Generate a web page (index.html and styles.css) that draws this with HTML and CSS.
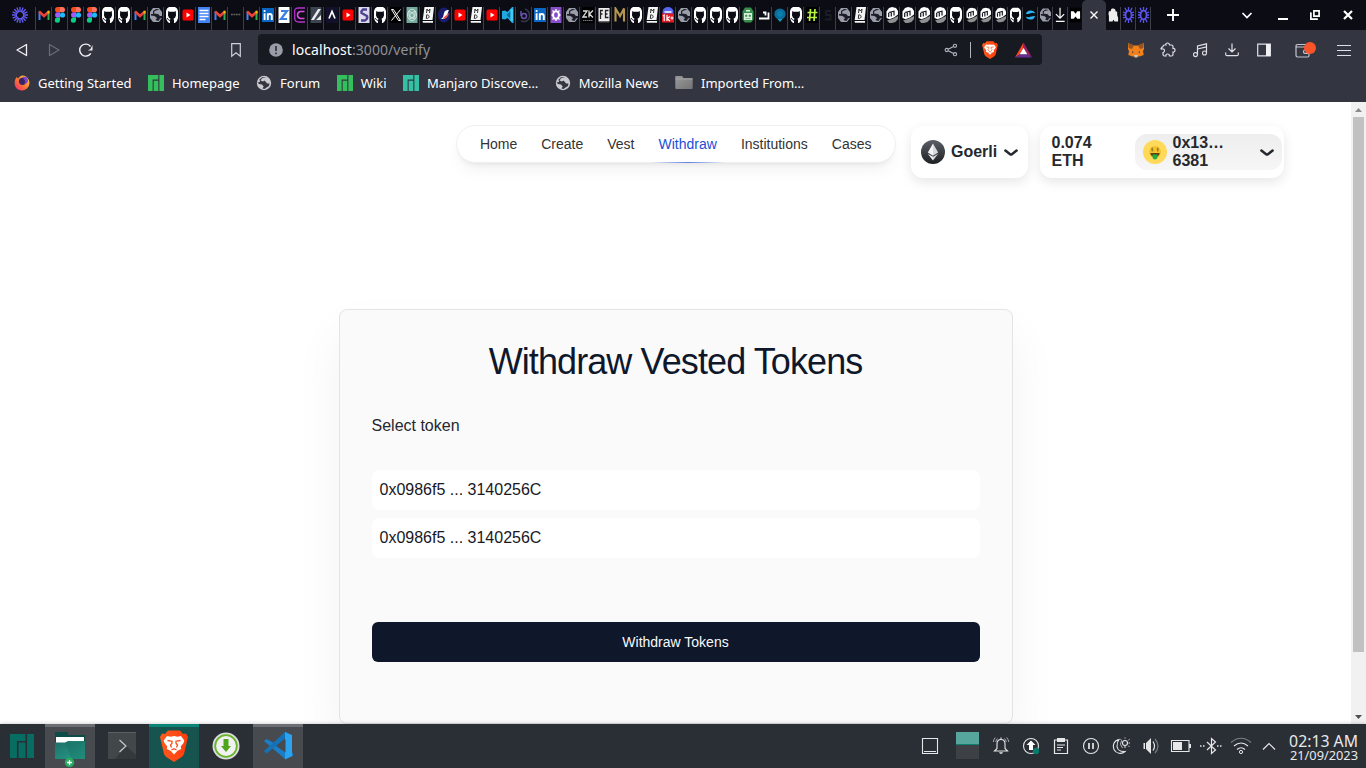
FILE: index.html
```html
<!DOCTYPE html>
<html lang="en">
<head>
<meta charset="utf-8">
<title>Withdraw Vested Tokens</title>
<link rel="stylesheet" href="styles.css">
</head>
<body>
<svg class="defs" width="0" height="0">
  <defs>
    <linearGradient id="eth-g" x1="0" y1="0" x2="0" y2="1"><stop offset="0" stop-color="#5b5f66"/><stop offset="1" stop-color="#1e2024"/></linearGradient>
    <linearGradient id="folder-g" x1="0" y1="0" x2="1" y2="1"><stop offset="0" stop-color="#9a9a9a"/><stop offset="1" stop-color="#747474"/></linearGradient>
    <linearGradient id="fx-g" x1="1" y1="0" x2="0" y2="1"><stop offset="0" stop-color="#ffe14d"/><stop offset=".5" stop-color="#ff7a30"/><stop offset="1" stop-color="#f0247a"/></linearGradient>
    <linearGradient id="teal-g" x1="0" y1="0" x2="1" y2="1"><stop offset="0" stop-color="#1d6f66"/><stop offset="1" stop-color="#26a08c"/></linearGradient>
    <linearGradient id="brave-g" x1="0" y1="0" x2="1" y2="0"><stop offset="0" stop-color="#ff5a1f"/><stop offset="1" stop-color="#ff3d0c"/></linearGradient>
  </defs>
  <symbol id="gmail" viewBox="0 0 12 16"><path d="M.5 13V4.500h2V13z" fill="#4285f4"/><path d="M11.500 13V4.500h-2V13z" fill="#34a853"/><path d="M1 4.500 6 9l5-4.500" fill="none" stroke="#ea4335" stroke-width="2.600"/><path d="M9.500 6.500V4l2-.5v3z" fill="#fbbc04"/></symbol>
  <symbol id="figma" viewBox="0 0 12 16"><path d="M6 0H3.700a2.600 2.600 0 0 0 0 5.300H6z" fill="#f24e1e"/><path d="M6 0h2.300a2.600 2.600 0 0 1 0 5.300H6z" fill="#ff7262"/><path d="M6 5.300H3.700a2.600 2.600 0 0 0 0 5.300H6z" fill="#a259ff"/><circle cx="8.500" cy="8" r="2.600" fill="#1abcfe"/><path d="M6 10.600H3.700A2.600 2.600 0 1 0 6 13.400z" fill="#0acf83"/></symbol>
  <symbol id="gh" viewBox="0 0 12 16"><path d="M3 0h6q2.500 1 3 4v7q-.5 3-3 5H8v-3l-.5-1.500Q9.500 11 10 8.500L9.800 4l-1.300.8h-5L2.200 4 2 8.500q.5 2.500 2.500 3L4 13v3H3Q.5 14 0 11V4q.5-3 3-4z" fill="#fff"/><path d="M1 11q1.500 2.500 3 2.500" fill="none" stroke="#0c0c14" stroke-width=".9"/></symbol>
  <symbol id="globe" viewBox="0 0 12 16"><path d="M3 1h6l3 4v6l-3 4H3l-3-4V5z" fill="#9a9ea9"/><path d="M9.500 2.500 4.500 4l-.5 2.500 4 .5 2 2h2v2l-2 .5-1.500 2.500-3-1 1.500-2-2.500-2L1 8.500V7h2V4L6 2zM10 5l1.500 1z" fill="#1c1d29"/><path d="M5.500 4.500h4v2h-3z" fill="#9a9ea9"/></symbol>
  <symbol id="globe16" viewBox="0 0 16 16"><circle cx="8" cy="8" r="7.200" fill="#c8cad0"/><path d="M10.500 2 6 3.200 4.500 5.500 7 6.500l1.500-1L10 7l1 1.500h2.500L13 11l-2.500 1.500L8.500 14l-2-.5 1.200-2L6 9.500 3 9 1.500 7.500 4 7 3.500 4.500 6 2.200z" fill="#333541"/><path d="m7 4.500 3-.8L11 5l-1 1.500L8.500 5z" fill="#c8cad0"/></symbol>
  <symbol id="yt" viewBox="0 0 12 16"><rect x=".5" y="2.500" width="11" height="11" rx="1.500" fill="#f00"/><path d="m4.500 5.500 4 2.500-4 2.500z" fill="#fff"/></symbol>
  <symbol id="docs" viewBox="0 0 12 16"><path d="M0 0h12v16H0z" fill="#4384f4"/><path d="M1.500 3.500h9M1.500 6.500h9M1.500 9.500h9M1.500 12.500h6" stroke="#fff" stroke-width="1.500"/></symbol>
  <symbol id="li" viewBox="0 0 12 16"><path d="M0 1h12v14H0z" fill="#0a66c2"/><path d="M2.600 6.200V13M5.800 13V6.200m0 3c0-3 4-3 4 0V13" fill="none" stroke="#fff" stroke-width="1.900"/><circle cx="2.600" cy="4" r="1.100" fill="#fff"/></symbol>
  <symbol id="zed" viewBox="0 0 12 16"><path d="M.5 0h11v16H.5z" fill="#fff"/><path d="M3 4h6L3 12h6" fill="none" stroke="#3a82e0" stroke-width="2.200"/></symbol>
  <symbol id="rings" viewBox="0 0 12 16"><g fill="none" stroke="#b431d0"><path d="M11 1H4Q0 1 .7 6v5q0 4 4 4H11" stroke-width="1.300"/><path d="M10.500 4.500H6.500Q3.500 5 3.500 8t3 3.500h4" stroke="#d94be0" stroke-width="1.500"/></g></symbol>
  <symbol id="slash" viewBox="0 0 12 16"><path d="M.5 0h11v16H.5z" fill="#3c4450"/><path d="M1 13 8 2h3L4 13zM6 13l5-5v5z" fill="#e7e9eb"/></symbol>
  <symbol id="aye" viewBox="0 0 12 16"><path d="M0 0h12v16H0z" fill="#12102a"/><path d="m3 11.500 3-7 3 7" fill="none" stroke="#fff" stroke-width="1.700"/></symbol>
  <symbol id="ess" viewBox="0 0 12 16"><path d="M.5 0h11v16H.5z" fill="#ded9ee"/><path d="M9 2.500H5Q3 4 3.500 6L9 9q1 3-2 4.500H3" fill="none" stroke="#4b4390" stroke-width="2.400"/></symbol>
  <symbol id="ex" viewBox="0 0 12 16"><path d="M0 0h12v16H0z" fill="#000"/><path d="M1.500 2.500h2l7 11h-2zM10.500 2.500l-9 11" fill="none" stroke="#fff"/></symbol>
  <symbol id="ai" viewBox="0 0 12 16"><path d="M.5 0h11v16H.5z" fill="#74aa9c"/><g fill="none" stroke="#e2efec" stroke-width=".8"><ellipse cx="6" cy="8" rx="4.500" ry="5.700"/><path d="m3 4 5 3v5L3 9zM9 4 4 7v5l5-3z"/></g></symbol>
  <symbol id="md" viewBox="0 0 12 16"><path d="M2.500 0H12l-1.500 13H.7zM.5 14h10.500v1.800H1z" fill="#f5f5f5"/><path d="m4.500 6 .5-4 1.200 2 1.800-2-.5 4M4.300 11.500l.4-3.700c3.300 0 3.300 3.700-.4 3.700" fill="none" stroke="#222" stroke-width=".9"/></symbol>
  <symbol id="swoosh" viewBox="0 0 12 16"><ellipse cx="6" cy="8" rx="6" ry="7.500" fill="#1a1d6e"/><path d="M1 12c4 0 4-2 5-6 1-3 3-3 5-3-2 3-1 8-6 9z" fill="#fff"/><path d="M6 10c2-1 3-3 5-4-1 4-3 6-6 6z" fill="#f05a4a"/></symbol>
  <symbol id="code" viewBox="0 0 12 16"><path d="m0 4 3-.5L5.500 5 10 0h1.500v16H10l-4.500-5L3 12.500 0 12z" fill="#1fa9e0"/><path d="M4.500 8 8.500 4v8z" fill="#0b6c9c"/><path d="M8.500 2h2.500v12H8.500z" fill="#45c8f5"/></symbol>
  <symbol id="orb" viewBox="0 0 12 16"><g fill="none"><path d="M3 14q7 2 8.500-4Q12 4 7 2" stroke="#34344c" stroke-width="1.500"/><circle cx="6" cy="9" r="2.500" stroke="#6753a8" stroke-width="1.500"/><path d="M3 4v5" stroke="#6753a8" stroke-width="1.500"/></g></symbol>
  <symbol id="gear" viewBox="0 0 12 16"><path d="M.5 0h11v16H.5z" fill="#8750c8"/><ellipse cx="6" cy="8" rx="2.900" ry="3.800" fill="none" stroke="#fff" stroke-width="2"/><path d="M6 2v2M6 12v2M1.500 8H3M9 8h1.500M2.500 3.500 4 5M9.500 3.500 8 5M2.500 12.500 4 11M9.500 12.500 8 11" stroke="#fff" stroke-width="1.300"/></symbol>
  <symbol id="zk" viewBox="0 0 12 16"><path d="M0 0h12v16H0z" fill="#000"/><path d="M1 4h4l-4 6h4M7 3.500V10.500M11 3.500 7.500 7l3.500 3.500" fill="none" stroke="#ddd" stroke-width="1.300"/><path d="M1 13.500h10" stroke="#777" stroke-dasharray="1.500 .5"/></symbol>
  <symbol id="fe" viewBox="0 0 12 16"><path d="M.5 1h11v13.500H.5z" fill="#eee"/><path d="M2.500 12V3.500h2.500M2.500 7h2M10.500 3.500H7.500v7h3M7.500 7h2" fill="none" stroke="#222" stroke-width="1.300"/><path d="M1 15h10" stroke="#555"/></symbol>
  <symbol id="em" viewBox="0 0 12 16"><path d="M1.500 14.500V1.500L6 9l4-7.500v13" fill="none" stroke="#b5964e" stroke-width="2.100"/></symbol>
  <symbol id="onek" viewBox="0 0 12 16"><ellipse cx="6" cy="5" rx="5.500" ry="5" fill="#5865f2"/><path d="M2.500 5h7" stroke="#fff" stroke-width="1.500"/><path d="M0 6.500h12v9H0z" fill="#e01b24"/><path d="m1 9 1.200-.8V14M5 8v6M8 9.500 5 11.500 8 14M8.500 11h3M10 9.500v3" fill="none" stroke="#fff" stroke-width="1.200"/></symbol>
  <symbol id="robot" viewBox="0 0 12 16"><path d="M3 .5h6l2.500 4v8L9 15.500H3L.5 12.500v-8z" fill="#388e4b"/><path d="M2 6h8v7H2zM4 3h4v1.500H4z" fill="#d9eddc"/><path d="M3.500 8h1.500v1.500H3.500zM7 8h1.500v1.500H7zM3.500 11.500h5" fill="#388e4b" stroke="#388e4b" stroke-width=".5"/></symbol>
  <symbol id="shin" viewBox="0 0 12 16"><path d="M1 11.500h9.500V5.500M5 5.500h2.500v3" fill="none" stroke="#fff" stroke-width="1.800"/></symbol>
  <symbol id="pin" viewBox="0 0 12 16"><ellipse cx="6" cy="7" rx="5.700" ry="5.500" fill="#0c6b9b"/><path d="m3.500 12 2.500 3 2.500-3z" fill="#10a0bb"/><ellipse cx="6" cy="7" rx="3" ry="3" fill="#087fae"/></symbol>
  <symbol id="hash" viewBox="0 0 12 16"><path d="M0 0h12v16H0z" fill="#000"/><path d="M4.500 2 3.500 14M9 2 8 14M1.500 5.500h10M1 10.500h10" stroke="#b7f43b" stroke-width="1.700"/></symbol>
  <symbol id="darks" viewBox="0 0 12 16"><path d="M9 4H4v4h4.500v4.500H3" fill="none" stroke="#1b1c24" stroke-width="1.800"/></symbol>
  <symbol id="mm" viewBox="0 0 12 16"><path d="M.5 11V4.500L3 1 6 0l4 1 2 3v3.500l-4 3-4.500 1.700z" fill="#fff"/><path d="M2.700 10V6M5.300 9.500V5.500M8 8.500V4.500M2.700 5.500l6-1.500" fill="none" stroke="#15161f" stroke-width="1.200"/><path d="m1 13.500 5-1.500 6-3v3l-2.500 3L6 16H3.500z" fill="#8e908f"/></symbol>
  <symbol id="swirl" viewBox="0 0 12 16"><path d="M1 7q1-4 5-4t5 3Q8 5 6 6T1 7zm10 2q-1 4-5 4T1 10q3 1 5 0t5-1z" fill="#29b6f6"/></symbol>
  <symbol id="dl" viewBox="0 0 12 16"><path d="M5.500 0v11M1 7l4.500 4.500L10 7M1 15h9.500" fill="none" stroke="#fff" stroke-width="1.300"/></symbol>
  <symbol id="bow" viewBox="0 0 12 16"><path d="M0 0h12v16H0z" fill="#000"/><path d="M1 4h3l2 2.500L8 4h3v8H8L6 9.500 4 12H1z" fill="#fff"/></symbol>
  <symbol id="piece" viewBox="0 0 12 16"><path d="M1 4h2q0-4 3-3t2 3l2 .5v3.500l1 3v4H7q-1-3-2 0H1V9l-.5-2z" fill="#eee"/></symbol>
  <symbol id="burst" viewBox="0 0 16 16"><path d="M8 0v5M8 11v5M0 8h5M11 8h5M2.300 2.300 6 6M10 10l3.700 3.700M2.300 13.700 6 10M10 6l3.700-3.700M4.900.6 6.800 5.200M9.200 10.800l1.900 4.600M.6 4.900l4.600 1.900M10.800 9.200l4.600 1.900M.6 11.100l4.600-1.900M10.800 6.800l4.600-1.900M4.900 15.400l1.900-4.600M9.200 5.200 11.100.6" stroke="#635df5" stroke-width="1.350"/></symbol>
  <symbol id="gearburst" viewBox="0 0 11 16"><ellipse cx="5.500" cy="8" rx="3" ry="4.300" fill="none" stroke="#5b55f0" stroke-width="1.700"/><path d="M5.500 0v3M5.500 13v3M2 .7l1.500 3.500M9 .7 7.500 4.200M2 15.300l1.500-3.500M9 15.300l-1.500-3.500M0 5l3 1M0 8h2.500M0 11l3-1M11 5 8 6M11 8H8.500M11 11l-3-1" stroke="#5b55f0" stroke-width="1.300"/></symbol>
  <symbol id="manjaro" viewBox="0 0 16 16"><path d="M0 0h10.300v4.600H4.600V16H0zM5.700 5.700h4.600V16H5.700zM11.400 0H16v16h-4.600z" fill="currentColor"/></symbol>
  <symbol id="brave" viewBox="0 0 28 32"><path d="m5 4 3-3.500h12L23 4l3-.5L28 7l-1 4-3 13q-1 2-3 3.500L14 32l-7-4.500Q5 26 4 24L1 11 0 7l2-3.500z" fill="url(#brave-g)"/><path d="m7 6 3.500.8L14 6l3.500.8L21 6l3.300 4.500-.8 2.500-2.800 3.500.5 2.500-3.700 1.700L14 24.500l-3.500-3.800L6.800 19l.5-2.500L4.500 13l-.8-2.500z" fill="#fff"/><path d="m7.500 10.500 4.500.7v2L10.500 15l1 2.500M20.500 10.500l-4.500.7v2l1.500 1.800-1 2.500M11.500 20l2.500-1.300 2.500 1.300" fill="none" stroke="#ff4d16" stroke-width="1.300"/></symbol>
</svg>

<header class="browser">
  <div class="tabs">
    <span class="tab pinned"><svg><use href="#burst"/></svg></span>
    <span class="tab"><svg><use href="#gmail"/></svg></span>
    <span class="tab"><svg><use href="#figma"/></svg></span>
    <span class="tab"><svg><use href="#figma"/></svg></span>
    <span class="tab"><svg><use href="#figma"/></svg></span>
    <span class="tab"><svg><use href="#gh"/></svg></span>
    <span class="tab"><svg><use href="#gh"/></svg></span>
    <span class="tab"><svg><use href="#gmail"/></svg></span>
    <span class="tab"><svg><use href="#globe"/></svg></span>
    <span class="tab"><svg><use href="#gh"/></svg></span>
    <span class="tab"><svg><use href="#yt"/></svg></span>
    <span class="tab"><svg><use href="#docs"/></svg></span>
    <span class="tab"><svg><use href="#gmail"/></svg></span>
    <span class="tab"><svg viewBox="0 0 12 16"><path d="M1 7.500h10" stroke="#666" stroke-width="1.600" stroke-dasharray="1.800 .7"/></svg></span>
    <span class="tab"><svg><use href="#gmail"/></svg></span>
    <span class="tab"><svg><use href="#li"/></svg></span>
    <span class="tab"><svg><use href="#zed"/></svg></span>
    <span class="tab"><svg><use href="#rings"/></svg></span>
    <span class="tab"><svg><use href="#slash"/></svg></span>
    <span class="tab"><svg><use href="#aye"/></svg></span>
    <span class="tab"><svg><use href="#yt"/></svg></span>
    <span class="tab"><svg><use href="#ess"/></svg></span>
    <span class="tab"><svg><use href="#gh"/></svg></span>
    <span class="tab"><svg><use href="#ex"/></svg></span>
    <span class="tab"><svg><use href="#ai"/></svg></span>
    <span class="tab"><svg><use href="#md"/></svg></span>
    <span class="tab"><svg><use href="#swoosh"/></svg></span>
    <span class="tab"><svg><use href="#yt"/></svg></span>
    <span class="tab"><svg><use href="#md"/></svg></span>
    <span class="tab"><svg><use href="#yt"/></svg></span>
    <span class="tab"><svg><use href="#code"/></svg></span>
    <span class="tab"><svg><use href="#orb"/></svg></span>
    <span class="tab"><svg><use href="#li"/></svg></span>
    <span class="tab"><svg><use href="#gear"/></svg></span>
    <span class="tab"><svg><use href="#globe"/></svg></span>
    <span class="tab"><svg><use href="#zk"/></svg></span>
    <span class="tab"><svg><use href="#fe"/></svg></span>
    <span class="tab"><svg><use href="#em"/></svg></span>
    <span class="tab"><svg><use href="#gh"/></svg></span>
    <span class="tab"><svg><use href="#md"/></svg></span>
    <span class="tab"><svg><use href="#onek"/></svg></span>
    <span class="tab"><svg><use href="#globe"/></svg></span>
    <span class="tab"><svg><use href="#gh"/></svg></span>
    <span class="tab"><svg><use href="#gh"/></svg></span>
    <span class="tab"><svg><use href="#gh"/></svg></span>
    <span class="tab"><svg><use href="#robot"/></svg></span>
    <span class="tab"><svg><use href="#shin"/></svg></span>
    <span class="tab"><svg><use href="#pin"/></svg></span>
    <span class="tab"><svg><use href="#gh"/></svg></span>
    <span class="tab"><svg><use href="#hash"/></svg></span>
    <span class="tab"><svg><use href="#darks"/></svg></span>
    <span class="tab"><svg><use href="#globe"/></svg></span>
    <span class="tab"><svg><use href="#md"/></svg></span>
    <span class="tab"><svg><use href="#globe"/></svg></span>
    <span class="tab"><svg><use href="#mm"/></svg></span>
    <span class="tab"><svg><use href="#mm"/></svg></span>
    <span class="tab"><svg><use href="#mm"/></svg></span>
    <span class="tab"><svg><use href="#mm"/></svg></span>
    <span class="tab"><svg><use href="#gh"/></svg></span>
    <span class="tab slim first"><svg><use href="#mm"/></svg></span>
    <span class="tab slim"><svg><use href="#mm"/></svg></span>
    <span class="tab slim"><svg><use href="#mm"/></svg></span>
    <span class="tab slim"><svg><use href="#gh"/></svg></span>
    <span class="tab slim"><svg><use href="#swirl"/></svg></span>
    <span class="tab slim"><svg><use href="#globe"/></svg></span>
    <span class="tab slim"><svg><use href="#dl"/></svg></span>
    <span class="tab slim last"><svg><use href="#bow"/></svg></span>
    <span class="tab current"><svg viewBox="0 0 10 10"><path d="m1.500 1.500 7 7m0-7-7 7" stroke="#fff" stroke-width="1.400"/></svg></span>
    <span class="tab slim"><svg><use href="#piece"/></svg></span>
    <span class="tab slim"><svg><use href="#gearburst"/></svg></span>
    <span class="tab slim"><svg><use href="#gearburst"/></svg></span>
    <svg class="new-tab" viewBox="0 0 14 14"><path d="M7 1v12M1 7h12" stroke="#fff" stroke-width="1.900"/></svg>
    <div class="window-buttons">
      <svg viewBox="0 0 16 16"><path d="m3.500 6 4.500 4.500L12.500 6" fill="none" stroke="#fff" stroke-width="1.700"/></svg>
      <svg viewBox="0 0 16 16"><path d="M3 12h10" stroke="#fff" stroke-width="2"/></svg>
      <svg viewBox="0 0 16 16"><path d="M6.900 3.900h5.200v5.200H6.900zM4.500 6H3.900v6.100H10v-.8" fill="none" stroke="#fff" stroke-width="1.700"/></svg>
      <svg viewBox="0 0 16 16"><path d="m4 4 8 8m0-8-8 8" stroke="#fff" stroke-width="2.200"/></svg>
    </div>
  </div>

  <div class="toolbar">
    <div class="nav-buttons">
      <svg viewBox="0 0 16 16"><path d="M12.500 2.500v11L3 8z" fill="none" stroke="#f1f1f4" stroke-width="1.300" stroke-linejoin="round"/></svg>
      <svg viewBox="0 0 16 16"><path d="M3.500 2.500v11L13 8z" fill="none" stroke="#6b6d79" stroke-width="1.200" stroke-linejoin="round"/></svg>
      <svg viewBox="0 0 16 16"><path d="M12.800 11.300A6 6 0 1 1 12.500 4.500" fill="none" stroke="#f1f1f4" stroke-width="1.400"/><path d="M14.500 3v5.500H9.800l2.700-1.500z" fill="#f1f1f4"/></svg>
    </div>
    <svg class="save" viewBox="0 0 16 16"><path d="M3.700 1.700h8.600v12.500L8 10.800l-4.300 3.400z" fill="none" stroke="#cfd0d8" stroke-width="1.200"/></svg>
    <div class="address">
      <svg class="info" viewBox="0 0 14 14"><circle cx="7" cy="7" r="6.800" fill="#9a9da8"/><path d="M7 3v5M7 9.500v1.700" stroke="#30323c" stroke-width="1.700"/></svg>
      <span class="url">localhost<span class="path">:3000/verify</span></span>
      <svg class="share" viewBox="0 0 14 14"><g fill="none" stroke="#b5b7c0" stroke-width="1.100"><circle cx="2.700" cy="7" r="1.600"/><circle cx="11" cy="2.800" r="1.600"/><circle cx="11" cy="11.200" r="1.600"/><path d="m4.200 6.300 5.300-2.700M4.200 7.700l5.300 2.700"/></g></svg>
      <span class="bar"></span>
      <svg class="shield"><use href="#brave"/></svg>
      <svg class="bat" viewBox="0 0 18 16"><path d="M9 0v5.500L5 12.500 0 16z" fill="#ff4724"/><path d="M9 0v5.500l4 7 5 3.500z" fill="#9e1f63"/><path d="M0 16h18l-5-3.500H5z" fill="#662d91"/><path d="m9 5.500 4 7H5z" fill="#fff"/></svg>
    </div>
    <div class="extensions">
      <svg viewBox="0 0 16 16"><path d="m0 1 6 2.500h4L16 1v6l-1 2 .7 4-4.200 1.500h-7L.3 13 1 9 0 7z" fill="#f2811d"/><path d="M0 1 6 3.500 4 7 .8 6zM16 1l-6 2.500L12 7l3.200-1z" fill="#98541f"/><path d="m4 9 2 1.500-2 .3zM12 9l-2 1.500 2 .3z" fill="#39404a"/><path d="M6 13h4l-.7 2.500H6.700z" fill="#cfc6ba"/></svg>
      <svg viewBox="0 0 16 16"><path d="M3 4.500Q3 3 4.500 3H6q-.5-2 1.500-2t2 2h2Q13 3 13 4.500v2q2-.3 2 1.700T13 10v2.500q0 1.500-1.500 1.500h-2q0-2-2-2T6 14H4.500Q3 14 3 12.500v-2Q4.500 10.300 4.500 8.500T2 7 3 4.500z" fill="none" stroke="#dfe0e6" stroke-width="1.200"/></svg>
      <svg viewBox="0 0 16 16"><path d="M5.500 12.500V4l9-2.200v9M5.500 7l9-2.200" fill="none" stroke="#dfe0e6" stroke-width="1.200"/><circle cx="3.500" cy="12.600" r="2" fill="none" stroke="#dfe0e6" stroke-width="1.100"/><circle cx="12.500" cy="11" r="2" fill="none" stroke="#dfe0e6" stroke-width="1.100"/></svg>
      <svg viewBox="0 0 16 16"><path d="M8 1.500v8M4.500 6.500 8 10l3.500-3.500M1.700 10.500v1.700q0 1.500 1.500 1.500h9.600q1.500 0 1.500-1.500v-1.700" fill="none" stroke="#dfe0e6" stroke-width="1.200"/></svg>
      <svg viewBox="0 0 16 16"><path d="M1.700 2.200h12.600v11.600H1.700z" fill="none" stroke="#dfe0e6" stroke-width="1.200"/><path d="M10 2h4.500v12H10z" fill="#f1f1f4"/></svg>
      <svg class="wallet" viewBox="0 0 24 18"><path d="M15 6H3.500Q2 6 2 4.800T3.500 3.500H13M2 4.800v9.500Q2 16 3.500 16h10q1.500 0 1.500-1.500V7.500M15 9h-4q-1.500 0-1.500 1.700t1.500 1.700h4" fill="none" stroke="#c4c5cc" stroke-width="1.200"/><circle cx="16" cy="7" r="6" fill="#fb542b"/></svg>
      <svg viewBox="0 0 16 16"><path d="M1 3.500h14M1 8.500h14M1 13.500h14" stroke="#dfe0e6" stroke-width="1.200"/></svg>
    </div>
  </div>

  <div class="bookmarks">
    <a><svg viewBox="0 0 16 16"><path d="M1 5q1-2 1.500-3L4 3.500Q6 1 8 .5q5 0 7 5 1.500 5-2 8-4 3.500-9 1Q-.5 11.500 1 5z" fill="url(#fx-g)"/><circle cx="8.500" cy="6.300" r="3.600" fill="#3b2560"/><path d="M8 2q6-1.500 6 4-.5 3-4 3 3-3-2-7z" fill="#7a43c9"/></svg>Getting Started</a>
    <a><svg class="green"><use href="#manjaro"/></svg>Homepage</a>
    <a><svg><use href="#globe16"/></svg>Forum</a>
    <a><svg class="green"><use href="#manjaro"/></svg>Wiki</a>
    <a><svg class="teal"><use href="#manjaro"/></svg>Manjaro Discove…</a>
    <a><svg><use href="#globe16"/></svg>Mozilla News</a>
    <a><svg class="folder" viewBox="0 0 18 16"><path d="M1 1h6l1.500 2H17q.7 0 .7 1v9q0 1-1 1H1.300q-1 0-1-1V2Q.3 1 1 1z" fill="url(#folder-g)"/><path d="M.5 4h17" stroke="#aaa" stroke-width=".8"/></svg>Imported From…</a>
  </div>
</header>

<div class="viewport">
  <main class="page">
    <div class="top">
      <nav class="pill">
        <a>Home</a><a>Create</a><a>Vest</a><a class="active">Withdraw</a><a>Institutions</a><a>Cases</a>
      </nav>
      <div class="wallet-buttons">
        <button class="chain">
          <svg class="token" viewBox="0 0 24 24"><circle cx="12" cy="12" r="12" fill="url(#eth-g)"/><path d="M12 3.500v12.200L6.800 12.500z" fill="#f4f4f6"/><path d="M12 3.500v12.200l5.200-3.200z" fill="#d7d8dc"/><path d="m6.800 13.800 5.200 3v3.700z" fill="#f4f4f6"/><path d="m17.200 13.800-5.200 3v3.700z" fill="#d7d8dc"/></svg>
          Goerli
          <svg class="chev" viewBox="0 0 14 7"><path d="m1.400 1.600 4.700 3.700q.9.600 1.800 0l4.700-3.700" fill="none" stroke="#25292e" stroke-width="2.500" stroke-linecap="round"/></svg>
        </button>
        <button class="account">
          <span class="balance">0.074<br>ETH</span>
          <span class="address-chip">
            <svg class="token" viewBox="0 0 24 24"><circle cx="12" cy="12" r="12" fill="#ffd95a"/><circle cx="12" cy="12" r="6" fill="#f7c02f"/><path d="M7.300 13h9.400q-.7 4-4.700 4t-4.700-4z" fill="#5f4010"/><path d="M9.500 14.500h5v2q0 3-2.500 3t-2.500-3z" fill="#1fae3f"/><path d="M9.300 7.500v4M14.700 7.500v4M8.400 10.700h1.500V9.500H8.600V8.300h1.500M13.900 10.700h1.500V9.500h-1.300V8.300h1.500" fill="none" stroke="#8c7a1c" stroke-width=".7"/></svg>
            <span class="hex">0x13…<br>6381</span>
            <svg class="chev" viewBox="0 0 14 7"><path d="m1.400 1.600 4.700 3.700q.9.600 1.800 0l4.700-3.700" fill="none" stroke="#25292e" stroke-width="2.500" stroke-linecap="round"/></svg>
          </span>
        </button>
      </div>
    </div>

    <section class="card">
      <h1>Withdraw Vested Tokens</h1>
      <p class="label">Select token</p>
      <div class="tokens">
        <div class="row">0x0986f5 ... 3140256C</div>
        <div class="row">0x0986f5 ... 3140256C</div>
      </div>
      <button class="submit">Withdraw Tokens</button>
    </section>
  </main>
  <div class="scrollbar">
    <svg viewBox="0 0 15 15"><path d="m4 10 3.500-4L11 10z" fill="#8b8b8b"/></svg>
    <div class="thumb"></div>
    <svg class="down" viewBox="0 0 15 15"><path d="m4 6 3.500 4L11 6z" fill="#505050"/></svg>
  </div>
</div>

<footer class="taskbar">
  <div class="apps">
    <span class="launcher"><svg><use href="#manjaro"/></svg></span>
    <span class="app open"><svg viewBox="0 0 32 36"><path d="M1 1h13v3h17v8H1z" fill="#0e4d47"/><path d="M2 6h28v10H2z" fill="#fff"/><path d="M1 11.500h10l3-1.500h17v18H1z" fill="url(#teal-g)"/><path d="m11 12 20-2v18H18z" fill="#17695f" opacity=".35"/><circle cx="15.500" cy="31.500" r="4.700" fill="#27ae60"/><path d="M15.500 29v5M13 31.500h5" stroke="#fff" stroke-width="1.300"/></svg></span>
    <span class="app"><svg viewBox="0 0 32 36"><path d="M2 1h28v27H2z" fill="#42474a"/><path d="m20 15 10 9v4H9z" fill="#34393c"/><path d="M2 1.500h28" stroke="#5a5f62"/><path d="m13.500 9 6.500 6-6.500 6" fill="none" stroke="#c6c9cb" stroke-width="1.200"/></svg></span>
    <span class="app focus"><svg class="lion"><use href="#brave"/></svg></span>
    <span class="app"><svg viewBox="0 0 32 36"><circle cx="16" cy="15" r="13.500" fill="#ddd"/><circle cx="16" cy="15" r="10.800" fill="#f1f1f1" stroke="#67b52b" stroke-width="1.800"/><path d="M13.500 8h5v7H21l-5 6-5-6h2.500z" fill="#4da51c"/></svg></span>
    <span class="app open"><svg viewBox="0 0 32 36"><path d="m2 10 2.500-2L31 22v3l-8 3z" fill="#1b7ec7"/><path d="m2 20 2.500 2.500L25 6V1h-2z" fill="#1472b8"/><path d="m23 1 7 3v21l-7 3.500z" fill="#2ba3ee"/><path d="M23.500 8.500v13L14 15z" fill="#474b50"/></svg></span>
  </div>
  <div class="tray">
    <svg class="cell" viewBox="0 0 30 30"><path d="M7.500 7.500h15v15h-15zM9 20.500h12" fill="none" stroke="#e6e7e8" stroke-width="1.100"/></svg>
    <div class="pager"><span class="on"></span><span></span></div>
    <svg class="cell" viewBox="0 0 30 30"><path d="M8.500 20h13l-2.500-2.500V13q0-4.500-4-4.500T11 13v4.500zM15 8V6.500" fill="none" stroke="#e6e7e8" stroke-width="1.100"/><path d="M9.800 11q.2-2 1.700-3.500M20.200 11q-.2-2-1.700-3.500M7.300 11q.2-2.500 2-4.500M22.700 11q-.2-2.500-2-4.500" fill="none" stroke="#b7b9bb" stroke-width=".9"/><path d="M13 21.300h4l-1 1.500h-2z" fill="#e6e7e8"/></svg>
    <svg class="cell" viewBox="0 0 30 30"><circle cx="15" cy="15" r="7.500" fill="none" stroke="#e6e7e8" stroke-width="1.100"/><path d="m15 9.500 4.500 4.500H17v5h-4v-5h-2.500z" fill="#fff"/><circle cx="20" cy="20" r="3.200" fill="#0a7a6c"/></svg>
    <svg class="cell" viewBox="0 0 30 30"><path d="M8.500 9h13v13.500h-13zM11 14h8M11 16.500h6M11 19h4" fill="none" stroke="#e6e7e8" stroke-width="1.200"/><path d="M11 7h8v4h-8z" fill="#e6e7e8"/></svg>
    <svg class="cell" viewBox="0 0 30 30"><circle cx="15" cy="15" r="7.500" fill="none" stroke="#e6e7e8" stroke-width="1.100"/><path d="M13 12v6M17 12v6" stroke="#e6e7e8" stroke-width="1.700"/></svg>
    <svg class="cell" viewBox="0 0 30 30"><path d="M13 8.500A7 7 0 1 0 19 20.500q-7 .5-8-5 0-4.500 2-7z" fill="none" stroke="#e6e7e8" stroke-width="1.100"/><path d="M15.500 9.500q-2.500 4 1 7.500" fill="none" stroke="#b7b9bb"/><circle cx="19" cy="12" r="2.500" fill="none" stroke="#e6e7e8" stroke-width="1.100"/><path d="M18 16h2M19 6.500v1M14.500 8.500l1 .5M23.500 8.500l-1 .5M22.500 15l1 .5M22.500 12H24" stroke="#e6e7e8"/></svg>
    <svg class="cell" viewBox="0 0 30 30"><path d="M7.500 12H9v6H7.500zM10 12l5-5v16l-5-5z" fill="#e6e7e8"/><path d="M17 10.500q3 4.500 0 9" fill="none" stroke="#e6e7e8" stroke-width="1.200"/><path d="M19 8q6 7 0 14" fill="none" stroke="#777b80" stroke-width="1.200"/></svg>
    <svg class="cell" viewBox="0 0 30 30"><path d="M5.500 9.500h17.500v11H5.500z" fill="none" stroke="#e6e7e8" stroke-width="1.100"/><path d="M7 11h9v8H7zM23 13h2v4h-2z" fill="#e6e7e8"/></svg>
    <svg class="cell" viewBox="0 0 30 30"><path d="m11 11 8.500 8-4 3.500v-15l4 3.500-8.500 8" fill="none" stroke="#e6e7e8" stroke-width="1.200"/><path d="M4 15h1.500M7 15h1.500M21 15h1.500M24 15h1.500" stroke="#e6e7e8" stroke-width="1.500"/></svg>
    <svg class="cell" viewBox="0 0 30 30"><path d="M5 11.500q10-8.500 20 0" fill="none" stroke="#7d8185" stroke-width="1.200"/><path d="M8 15q7-6 14 0M11 18.500q4-3.500 8 0" fill="none" stroke="#e6e7e8" stroke-width="1.200"/><circle cx="15" cy="21" r="1.600" fill="none" stroke="#e6e7e8"/></svg>
    <svg class="cell" viewBox="0 0 30 30"><path d="m7 18.500 6-6 6 6" fill="none" stroke="#e6e7e8" stroke-width="1.200"/></svg>
    <div class="clock"><span class="time">02:13 AM</span><span class="date">21/09/2023</span></div>
  </div>
</footer>
</body>
</html>
```
FILE: styles.css
```css
* { box-sizing: border-box; }
body {
  margin: 0;
  width: 1366px;
  height: 768px;
  overflow: hidden;
  display: flex;
  flex-direction: column;
  background: #fff;
  font-family: "Liberation Sans", Arial, sans-serif;
}
svg { display: block; flex: none; }
.defs { position: absolute; }
button { font: inherit; border: 0; margin: 0; }

/* Browser chrome */
.browser {
  height: 102px;
  flex: none;
  background: #333541;
  color: #fff;
  font-family: "Noto Sans", sans-serif;
}
.tabs {
  height: 30px;
  display: flex;
  align-items: flex-end;
  background: #0c0c14;
}
.tab {
  width: 16px;
  height: 23px;
  flex: none;
  padding-left: 2px;
  border-right: 1px solid #3d3e47;
}
.tab svg { width: 12px; height: 16px; }
.tab.pinned { width: 36px; padding-left: 12px; }
.tab.pinned svg { width: 16px; }
.tab.slim { width: 15px; }
.tab.slim svg { width: 11px; }
.tab.slim.first { width: 14px; }
.tab.slim.last { width: 14px; border-right: 0; }
.tab.current {
  width: 24px;
  height: 30px;
  padding: 10px 0 0 7px;
  border: 0;
  border-radius: 5px 5px 0 0;
  background: #333541;
}
.tab.current svg { width: 10px; height: 10px; }
.new-tab { width: 14px; height: 14px; margin: 0 0 8px 15px; }
.window-buttons { display: flex; gap: 16px; margin: 0 10px 7px auto; }
.window-buttons svg { width: 16px; height: 16px; }
.window-buttons svg:first-child { margin-right: 4px; }
.window-buttons svg:nth-child(3) { margin-right: 1px; }

.toolbar {
  height: 35px;
  margin-top: 2px;
  padding: 0 14px;
  display: flex;
  align-items: center;
}
.nav-buttons { display: flex; gap: 16px; }
.nav-buttons svg { width: 16px; height: 16px; }
.toolbar > .nav-buttons, .toolbar > .save, .toolbar > .extensions { padding-bottom: 0; }
.save { width: 16px; height: 16px; margin: 0 14px 0 134px; }
.address {
  width: 784px;
  height: 31px;
  padding-left: 11px;
  display: flex;
  align-items: center;
  background: #181a21;
  border-radius: 4px;
}
.info { width: 14px; height: 14px; }
.url { margin-left: 9px; font-size: 14px; line-height: 20px; letter-spacing: .08px; }
.path { color: #8f9199; }
.share { width: 14px; height: 14px; margin-left: auto; }
.bar { width: 1px; height: 16px; margin: 0 11px 0 12px; background: #b4b5bb; }
.shield { width: 16px; height: 18px; }
.bat { width: 17px; height: 16px; margin: 0 10px 0 17px; }
.extensions { margin-left: auto; display: flex; align-items: center; gap: 16px; }
.extensions svg { width: 16px; height: 16px; }
.extensions .wallet { width: 24px; height: 18px; margin: 0 2px 0 6px; }

.bookmarks {
  height: 35px;
  padding: 0 14px 4px;
  display: flex;
  align-items: center;
  gap: 16.500px;
  font-size: 13px;
}
.bookmarks a { display: flex; align-items: center; gap: 8px; white-space: nowrap; }
.bookmarks svg { width: 16px; height: 16px; }
.bookmarks svg.folder { width: 18px; }
.green { color: #35bf5c; }
.teal { color: #35bfa4; }

/* Page */
.viewport { height: 622px; flex: none; display: flex; overflow: hidden; }
.page { width: 1351px; overflow: hidden; }
.top {
  height: 207px;
  padding: 24px 67px 0 0;
  display: flex;
  justify-content: flex-end;
  align-items: flex-start;
}
.pill {
  height: 38px;
  padding: 0 23px;
  display: flex;
  gap: 24px;
  align-items: center;
  border: 1px solid #f0f0f0;
  border-radius: 19px;
  background: #fff;
  box-shadow: 0 10px 15px -3px rgba(0,0,0,.05), 0 4px 6px -4px rgba(0,0,0,.1);
  font-size: 14px;
  color: #333;
  margin: -1px 15.500px 0 0;
}
.pill a { height: 36px; line-height: 37px; }
.pill .active { position: relative; color: #1d4ed8; }
.pill .active::after {
  content: "";
  position: absolute;
  left: -8px;
  right: -8px;
  bottom: -1px;
  height: 1px;
  background: linear-gradient(90deg, rgba(29,78,216,0), #5f80e2, rgba(29,78,216,0));
}
.wallet-buttons {
  display: flex;
  gap: 12px;
  color: #25292e;
  font-size: 16px;
  font-weight: 700;
  line-height: 18px;
}
.wallet-buttons button {
  height: 52px;
  display: flex;
  align-items: center;
  color: inherit;
  text-align: left;
  background: #fff;
  border-radius: 12px;
  box-shadow: 0 4px 12px rgba(0,0,0,.1);
}
.token { width: 24px; height: 24px; }
.chev { width: 14px; height: 7px; }
.chain { width: 117px; padding: 0 10px; gap: 6px; }
.chain .chev { margin-left: auto; }
.account { width: 244px; padding: 0 2px 0 11.500px; justify-content: space-between; }
.address-chip {
  width: 147px;
  height: 36px;
  padding: 0 8px 0 8px;
  display: flex;
  align-items: center;
  gap: 5.500px;
  border-radius: 12px;
  background: linear-gradient(#eee, #f6f6f6);
}
.address-chip .chev { margin-left: auto; }

.card {
  width: 674px;
  height: 415px;
  margin: 0 auto;
  padding: 32px 32px 0;
  background: #fafafa;
  border: 1px solid #e4e4e7;
  border-radius: 8px;
  box-shadow: 0 25px 50px rgba(0,0,0,.055);
  color: #27272f;
}
.card h1 {
  margin: 0;
  font-size: 36px;
  font-weight: 400;
  line-height: 40px;
  letter-spacing: -.9px;
  text-align: center;
  color: #0f172a;
}
.label { margin: 32px 0 0; font-size: 16px; line-height: 24px; }
.tokens { margin-top: 32px; display: flex; flex-direction: column; gap: 8px; }
.row {
  height: 40px;
  padding: 0 8px;
  border-radius: 8px;
  background: #fff;
  font-size: 16px;
  line-height: 39px;
  color: #18181f;
}
.submit {
  width: 100%;
  height: 40px;
  margin-top: 64px;
  border-radius: 6px;
  background: #0f172a;
  color: #f8fafc;
  font-size: 14px;
}
.scrollbar {
  width: 15px;
  display: flex;
  flex-direction: column;
  align-items: center;
  background: #f1f1f1;
}
.scrollbar svg { width: 15px; height: 15px; }
.thumb { width: 11px; height: 535px; background: #c1c1c1; }
.scrollbar .down { margin-top: auto; }

/* Desktop panel */
.taskbar {
  height: 44px;
  flex: none;
  display: flex;
  justify-content: space-between;
  background: #2a2e35;
  box-shadow: 0 0 4px rgba(0,0,0,.25);
  position: relative;
}
.apps { display: flex; gap: 2px; }
.launcher { width: 43px; padding: 10px 0 0 10px; color: #076d63; }
.launcher svg { width: 24px; height: 24px; }
.app {
  width: 50px;
  padding-top: 6px;
  border-top: 3px solid transparent;
  display: flex;
  justify-content: center;
}
.app svg { width: 32px; height: 36px; margin-top: -2px; }
.app .lion { width: 28px; height: 32px; margin-top: -3px; }
.app.open { background: #474b50; border-color: #6b6e72; }
.app.focus { background: #17544f; border-color: #0b8577; }
.tray { display: flex; align-items: center; }
.cell { width: 30px; height: 30px; }
.pager { width: 23px; height: 27px; margin: -1px 7px 0 11px; display: flex; flex-direction: column; }
.pager span { height: 14px; background: #3d4145; }
.pager .on { height: 13px; background: #56a69d; border-bottom: 1px solid #0f7d70; }
.clock {
  width: 80px;
  padding: 1px 8px 0 0;
  display: flex;
  flex-direction: column;
  align-items: flex-end;
  font-family: "Noto Sans", sans-serif;
  color: #e8e9ea;
  white-space: nowrap;
}
.time { font-size: 15.800px; line-height: 16px; }
.date { font-size: 12.800px; line-height: 12px; }
```
